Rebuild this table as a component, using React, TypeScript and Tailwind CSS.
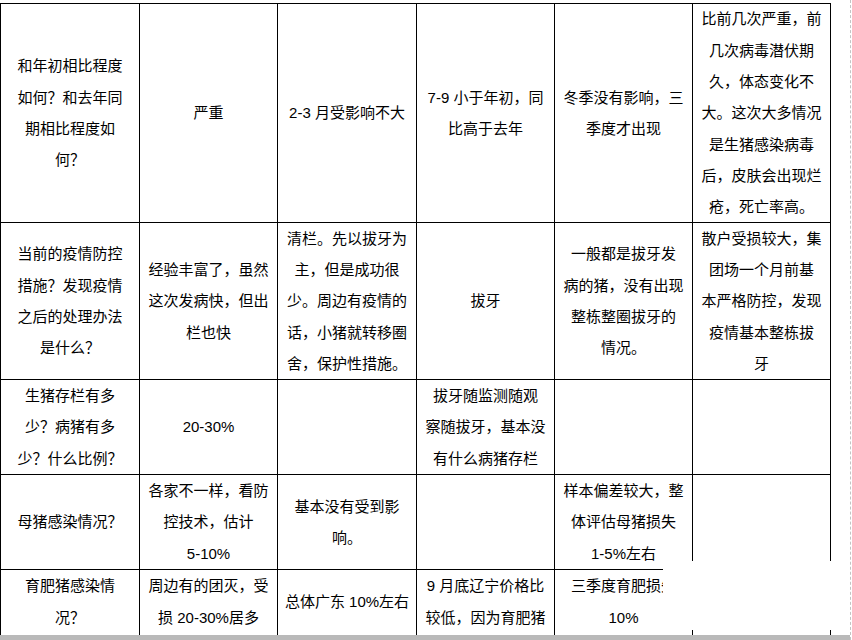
import React from "react";

type Cell = string[];

const rows: { cells: Cell[]; last?: boolean }[] = [
  {
    cells: [
      ["和年初相比程度", "如何？和去年同", "期相比程度如", "何？"],
      ["严重"],
      ["2-3 月受影响不大"],
      ["7-9 小于年初，同", "比高于去年"],
      ["冬季没有影响，三", "季度才出现"],
      [
        "比前几次严重，前",
        "几次病毒潜伏期",
        "久，体态变化不",
        "大。这次大多情况",
        "是生猪感染病毒",
        "后，皮肤会出现烂",
        "疮，死亡率高。",
      ],
    ],
  },
  {
    cells: [
      ["当前的疫情防控", "措施？发现疫情", "之后的处理办法", "是什么？"],
      ["经验丰富了，虽然", "这次发病快，但出", "栏也快"],
      ["清栏。先以拔牙为", "主，但是成功很", "少。周边有疫情的", "话，小猪就转移圈", "舍，保护性措施。"],
      ["拔牙"],
      ["一般都是拔牙发", "病的猪，没有出现", "整栋整圈拔牙的", "情况。"],
      ["散户受损较大，集", "团场一个月前基", "本严格防控，发现", "疫情基本整栋拔", "牙"],
    ],
  },
  {
    cells: [
      ["生猪存栏有多", "少？病猪有多", "少？什么比例？"],
      ["20-30%"],
      [],
      ["拔牙随监测随观", "察随拔牙，基本没", "有什么病猪存栏"],
      [],
      [],
    ],
  },
  {
    cells: [
      ["母猪感染情况？"],
      ["各家不一样，看防", "控技术，估计", "5-10%"],
      ["基本没有受到影", "响。"],
      [],
      ["样本偏差较大，整", "体评估母猪损失", "1-5%左右"],
      [],
    ],
  },
  {
    last: true,
    cells: [
      ["育肥猪感染情", "况？"],
      ["周边有的团灭，受", "损 20-30%居多"],
      ["总体广东 10%左右"],
      ["9 月底辽宁价格比", "较低，因为育肥猪"],
      ["三季度育肥损失", "10%"],
      [],
    ],
  },
];

export default function App() {
  return (
    <div
      className="relative w-[852px] h-[640px] overflow-hidden bg-white text-black"
      style={{ fontFamily: '"Liberation Sans", "Noto Sans CJK SC", sans-serif' }}
    >
      <div className="flex flex-col h-[640px] w-[851px] border-r border-dashed border-[#c4c4c4]">
        <div className="h-[635px] overflow-hidden pt-[3px]">
          <div className="grid grid-cols-[138px_137px_138px_137px_137px_137px] grid-rows-[218px_156px_94px_94px_80px] gap-px bg-black p-px w-[831px]">
            {rows.map((row, ri) =>
              row.cells.map((cell, ci) => (
                <div
                  key={`${ri}-${ci}`}
                  className={
                    row.last
                      ? "bg-white flex flex-col items-center overflow-hidden"
                      : "bg-white flex flex-col items-center justify-center overflow-hidden"
                  }
                >
                  <div
                    className={
                      row.last
                        ? "h-[63px] flex flex-col items-center justify-center"
                        : "flex flex-col items-center justify-center"
                    }
                  >
                    {cell.map((line, li) => (
                      <div
                        key={li}
                        className="whitespace-nowrap text-[15px] leading-[31.3px] text-center"
                      >
                        {line}
                      </div>
                    ))}
                  </div>
                </div>
              ))
            )}
          </div>
        </div>
      </div>
      <div className="absolute left-0 bottom-0 w-[850px] h-[5px] bg-[#b9b9b9]" />
      <div className="absolute left-[663px] top-[561px] w-[186px] h-[69px] bg-white" />
    </div>
  );
}
